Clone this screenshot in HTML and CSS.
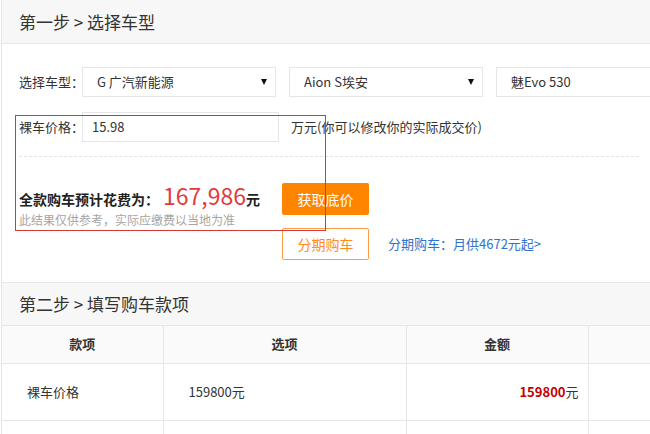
FILE: index.html
```html
<!DOCTYPE html>
<html lang="zh-CN">
<head>
  <meta charset="UTF-8">
  <meta name="viewport" content="width=device-width, initial-scale=1.0">
  <title>购车计算</title>
  <link rel="stylesheet" href="styles.css">
</head>
<body>
  <div class="page">
    <div class="step">
      <div class="step-title">第一步 &gt; 选择车型</div>
      <div class="step-body">
        <div class="form-row">
          <span class="label">选择车型：</span>
          <div class="select"><span>G 广汽新能源</span><i class="arrow"></i></div>
          <div class="select"><span>Aion S埃安</span><i class="arrow"></i></div>
          <div class="select"><span>魅Evo 530</span><i class="arrow"></i></div>
        </div>
        <div class="form-row">
          <span class="label">裸车价格：</span>
          <div class="input">15.98</div>
          <span class="hint">万元(你可以修改你的实际成交价)</span>
        </div>
        <div class="divider"></div>
        <div class="result">
          <div class="result-left">
            <div class="total">全款购车预计花费为：<span class="price">167,986</span>元</div>
            <div class="tip">此结果仅供参考，实际应缴费以当地为准</div>
          </div>
          <div class="result-right">
            <button class="btn btn-primary">获取底价</button>
            <div class="loan-row">
              <button class="btn btn-outline">分期购车</button>
              <a class="loan-link" href="#">分期购车：月供4672元起&gt;</a>
            </div>
          </div>
        </div>
      </div>
      <div class="highlight"></div>
    </div>

    <div class="step step-two">
      <div class="step-title">第二步 &gt; 填写购车款项</div>
      <table class="fees">
        <colgroup>
          <col class="col-name">
          <col class="col-option">
          <col class="col-amount">
          <col class="col-rest">
        </colgroup>
        <thead>
          <tr>
            <th>款项</th>
            <th>选项</th>
            <th>金额</th>
            <th></th>
          </tr>
        </thead>
        <tbody>
          <tr>
            <td class="name">裸车价格</td>
            <td class="option">159800元</td>
            <td class="amount"><b>159800</b>元</td>
            <td></td>
          </tr>
          <tr>
            <td></td>
            <td></td>
            <td></td>
            <td></td>
          </tr>
        </tbody>
      </table>
    </div>
  </div>
</body>
</html>
```

FILE: styles.css
```css
html, body {
  margin: 0;
  overflow: hidden;
}

body {
  font-family: "Noto Sans CJK SC", "Noto Sans", sans-serif;
  font-size: 13px;
  line-height: 1.4;
  color: #333333;
  background: #ffffff;
}

.page {
  width: 780px;
  margin-left: 1px;
  border-left: 1px solid #e6e6e6;
}

.step {
  position: relative;
}

.step-title {
  height: 43px;
  line-height: 43px;
  padding-left: 17px;
  font-size: 17px;
  background: #f7f7f7;
  border-bottom: 1px solid #e8e8e8;
}

.step-body {
  padding: 23px 0 0 17px;
}

.form-row {
  display: flex;
  align-items: center;
  height: 30px;
  margin-bottom: 15px;
  white-space: nowrap;
}

.label {
  flex: none;
  width: 63px;
}

.select {
  flex: none;
  display: flex;
  justify-content: space-between;
  align-items: center;
  box-sizing: border-box;
  width: 194px;
  height: 30px;
  margin-right: 13px;
  padding: 0 8px 0 14px;
  border: 1px solid #e6e6e6;
}

.arrow {
  width: 0;
  height: 0;
  border-left: 3.5px solid transparent;
  border-right: 3.5px solid transparent;
  border-top: 6px solid #111111;
}

.input {
  flex: none;
  box-sizing: border-box;
  width: 197px;
  height: 30px;
  line-height: 28px;
  padding-left: 9px;
  border: 1px solid #e6e6e6;
}

.hint {
  margin-left: 12px;
}

.divider {
  width: 620px;
  border-top: 1px dashed #e3e3e3;
  margin-top: -1px;
}

.result {
  display: flex;
  padding-top: 26px;
}

.result-left {
  width: 263px;
  margin-top: -3px;
}

.total {
  font-size: 14px;
  font-weight: bold;
  color: #222222;
  line-height: 30px;
  white-space: nowrap;
}

.price {
  margin-left: 4px;
  font-size: 23px;
  font-weight: normal;
  color: #e4393c;
}

.tip {
  margin-top: -2px;
  font-size: 12px;
  color: #a6a6a6;
}

.btn {
  box-sizing: border-box;
  width: 87px;
  height: 32px;
  font-family: inherit;
  font-size: 14px;
  border-radius: 2px;
  cursor: pointer;
}

.btn-primary {
  display: block;
  background: #ff8400;
  border: none;
  color: #ffffff;
}

.btn-outline {
  background: #ffffff;
  border: 1px solid #ff9d47;
  color: #ff8a1f;
}

.loan-row {
  display: flex;
  align-items: center;
  margin-top: 13px;
}

.loan-link {
  margin-left: 19px;
  color: #2e73cf;
  text-decoration: none;
}

.highlight {
  position: absolute;
  left: 13px;
  top: 115px;
  width: 309px;
  height: 114px;
  border: 1px solid #d23a3a;
}

.step-two {
  margin-top: 22px;
  border-top: 1px solid #e8e8e8;
}

.step-two .step-title {
  height: 42px;
  line-height: 42px;
  border-bottom: none;
}

.fees {
  width: 779px;
  border-collapse: collapse;
  table-layout: fixed;
}

.col-name {
  width: 161px;
}

.col-option {
  width: 243px;
}

.col-amount {
  width: 182px;
}

.col-rest {
  width: 193px;
}

.fees th,
.fees td {
  padding: 0;
  border: 1px solid #e6e6e6;
}

.fees tr > :first-child {
  border-left: none;
}

.fees th {
  height: 37px;
  font-size: 13px;
  font-weight: bold;
  background: #fafafa;
  text-align: center;
}

.fees td {
  height: 56px;
}

.name {
  padding-left: 25px !important;
}

.option {
  padding-left: 25px !important;
}

.amount {
  text-align: right;
  padding-right: 9px !important;
}

.amount b {
  color: #c40000;
}
```
